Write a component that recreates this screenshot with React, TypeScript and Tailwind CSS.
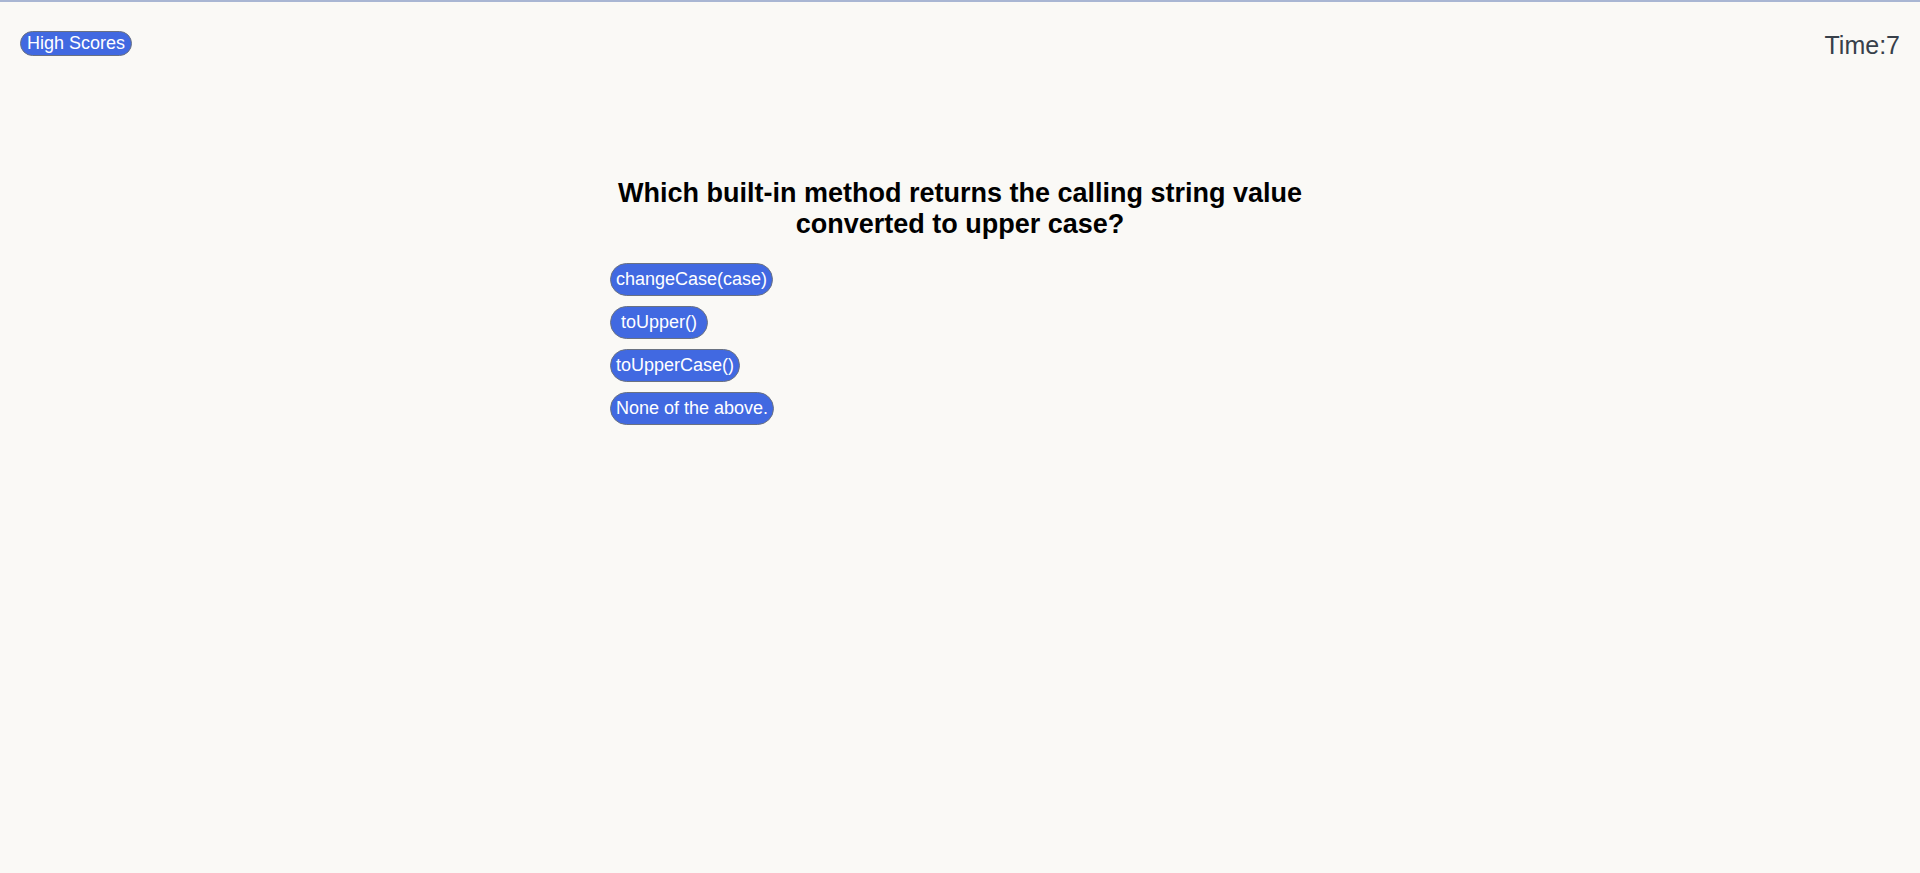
import React from "react";

const answers = ["changeCase(case)", " toUpper() ", "toUpperCase()", "None of the above."];

const App = () => {
  return (
    <div className="min-h-screen bg-[#faf9f6] border-t-2 border-[#a9b6d3] font-['Liberation_Sans',Arial,sans-serif]">
      <div className="flex justify-between items-start px-5 pt-[29px]">
        <button className="bg-[#4169e1] text-white text-[18px] leading-[21px] h-[25px] px-[6px] rounded-full border border-gray-500">
          High Scores
        </button>
        <div className="text-[25px] leading-[28px] text-[#37404a]">Time:7</div>
      </div>
      <div className="w-[700px] mx-auto mt-[119px]">
        <h1 className="text-[27px] leading-[31px] font-bold text-black text-center">
          Which built-in method returns the calling string value converted to upper case?
        </h1>
        <div className="flex flex-col items-start gap-[10px] mt-[23px]">
          {answers.map((a, i) => (
            <button
              key={i}
              className="bg-[#4169e1] text-white text-[18px] leading-[21px] h-[33px] px-[5px] rounded-full border border-gray-500 whitespace-pre"
            >
              {a}
            </button>
          ))}
        </div>
      </div>
    </div>
  );
};

export default App;
